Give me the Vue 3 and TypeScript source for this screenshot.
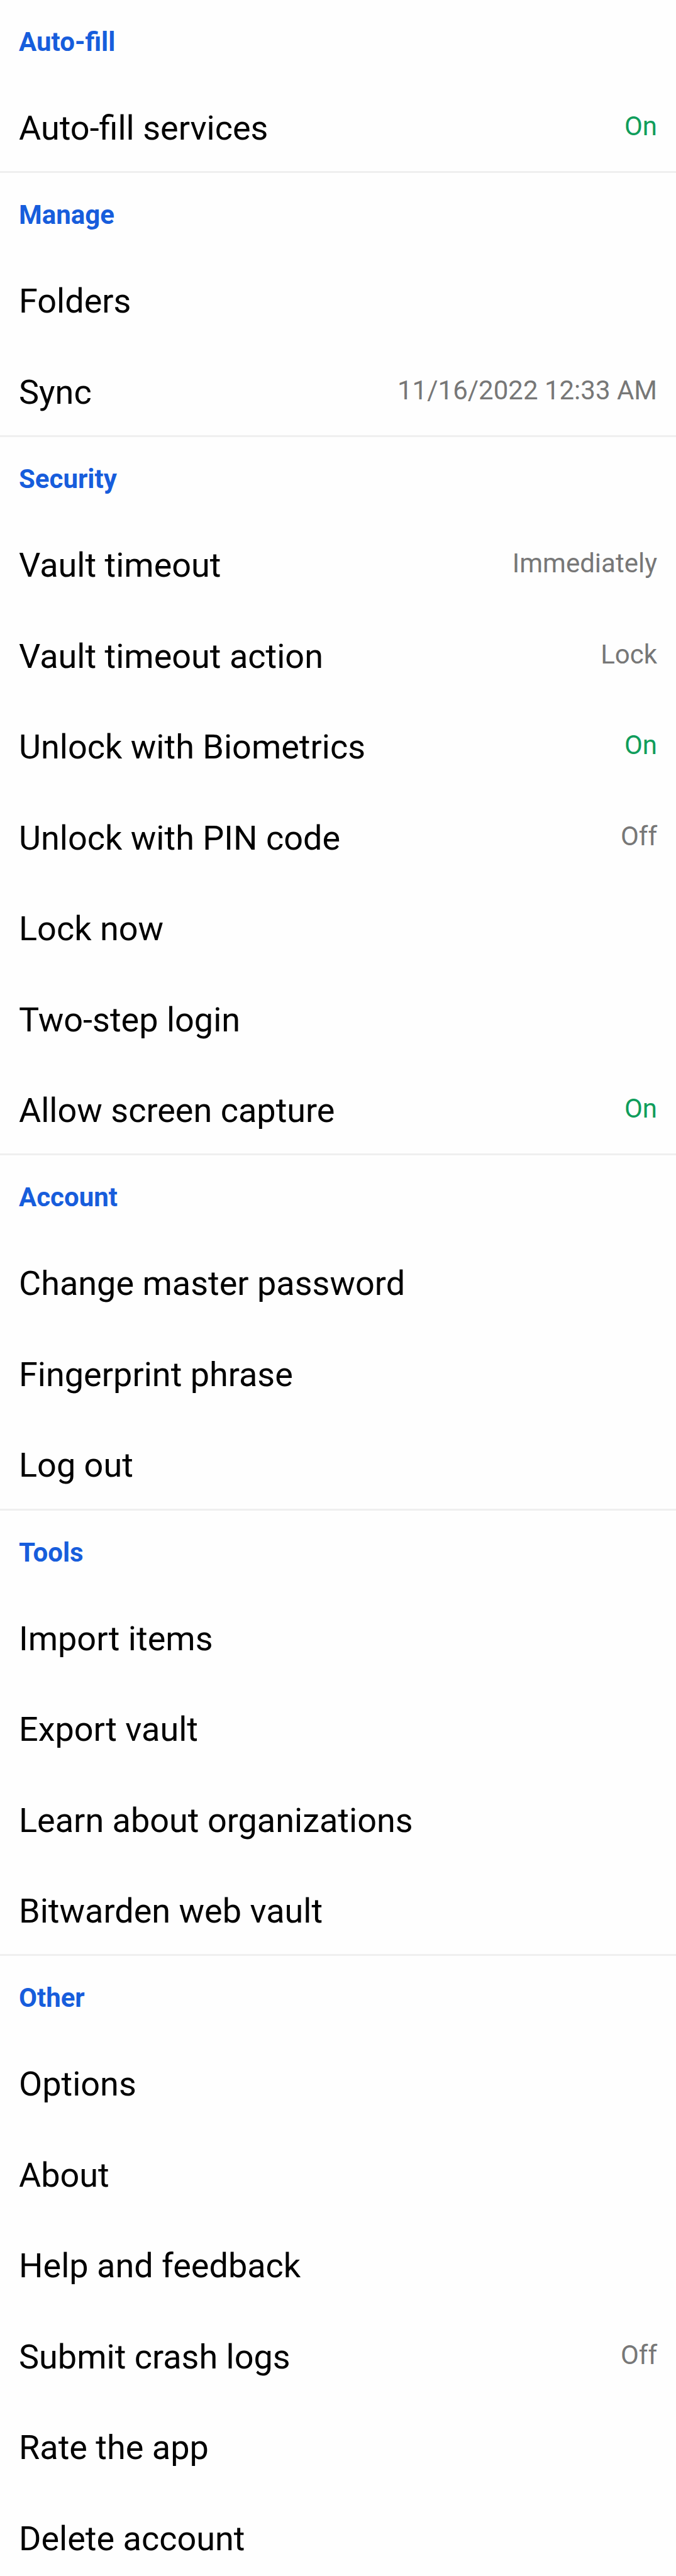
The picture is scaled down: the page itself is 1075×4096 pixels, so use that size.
<script setup lang="ts">
interface SettingItem {
  label: string
  value?: string
  enabled?: boolean
}

interface SettingGroup {
  title: string
  items: SettingItem[]
}

const groups: SettingGroup[] = [
  {
    title: 'Auto-fill',
    items: [{ label: 'Auto-fill services', value: 'On', enabled: true }],
  },
  {
    title: 'Manage',
    items: [{ label: 'Folders' }, { label: 'Sync', value: '11/16/2022 12:33 AM' }],
  },
  {
    title: 'Security',
    items: [
      { label: 'Vault timeout', value: 'Immediately' },
      { label: 'Vault timeout action', value: 'Lock' },
      { label: 'Unlock with Biometrics', value: 'On', enabled: true },
      { label: 'Unlock with PIN code', value: 'Off' },
      { label: 'Lock now' },
      { label: 'Two-step login' },
      { label: 'Allow screen capture', value: 'On', enabled: true },
    ],
  },
  {
    title: 'Account',
    items: [
      { label: 'Change master password' },
      { label: 'Fingerprint phrase' },
      { label: 'Log out' },
    ],
  },
  {
    title: 'Tools',
    items: [
      { label: 'Import items' },
      { label: 'Export vault' },
      { label: 'Learn about organizations' },
      { label: 'Bitwarden web vault' },
    ],
  },
  {
    title: 'Other',
    items: [
      { label: 'Options' },
      { label: 'About' },
      { label: 'Help and feedback' },
      { label: 'Submit crash logs', value: 'Off' },
      { label: 'Rate the app' },
      { label: 'Delete account' },
    ],
  },
]
</script>

<template>
  <main class="settings">
    <section v-for="group in groups" :key="group.title" class="group">
      <h2 class="title">{{ group.title }}</h2>
      <button v-for="item in group.items" :key="item.label" type="button" class="row">
        <span class="label">{{ item.label }}</span>
        <span v-if="item.value" class="value" :class="{ on: item.enabled }">{{ item.value }}</span>
      </button>
      <hr class="divider" />
    </section>
  </main>
</template>

<style>
body {
  margin: 0;
  background: #fefefe;
}
</style>

<style scoped>
.settings {
  display: flex;
  flex-direction: column;
  min-height: 100vh;
  font-family: Roboto, 'Noto Sans', sans-serif;
}

/* Titles, rows and dividers all share the one column, so rows stretch evenly */
.group {
  display: contents;
}

.title {
  flex: none;
  box-sizing: border-box;
  height: 128px;
  margin: 0;
  padding: 42px 30px 0;
  color: #175ddc;
  font-size: 42px;
  font-weight: 700;
  line-height: 50px;
}

.row {
  display: flex;
  flex: 1 0 144px;
  align-items: flex-start;
  justify-content: space-between;
  gap: 30px;
  box-sizing: border-box;
  width: 100%;
  margin: 0;
  padding: 44px 30px 0;
  border: 0;
  background: none;
  color: #000;
  font: inherit;
  text-align: left;
  cursor: pointer;
}

.group:last-child .row:last-of-type {
  flex-basis: 135px;
}

.label {
  font-size: 54px;
  line-height: 64px;
}

.value {
  padding-top: 4px;
  color: #777;
  font-size: 42px;
  line-height: 50px;
  white-space: nowrap;
}

.value.on {
  color: #0f9d5b;
}

.divider {
  flex: none;
  width: 100%;
  height: 3px;
  margin: 0;
  border: 0;
  background: #efefef;
}

.group:last-child .divider {
  display: none;
}
</style>
